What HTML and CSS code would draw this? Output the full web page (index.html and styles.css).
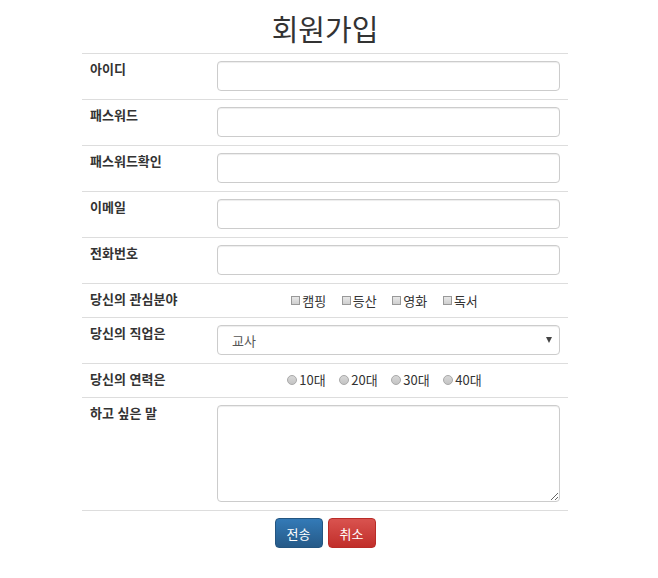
FILE: index.html
```html
<!DOCTYPE html>
<html lang="ko">
<head>
    <meta charset="UTF-8">
    <title>회원가입</title>
    <link rel="stylesheet" href="styles.css">
</head>
<body>
    <div class="container">
        <h1>회원가입</h1>
        <form>
            <table class="join-table">
                <tr>
                    <th>아이디</th>
                    <td><input type="text" class="form-control"></td>
                </tr>
                <tr>
                    <th>패스워드</th>
                    <td><input type="password" class="form-control"></td>
                </tr>
                <tr>
                    <th>패스워드확인</th>
                    <td><input type="password" class="form-control"></td>
                </tr>
                <tr>
                    <th>이메일</th>
                    <td><input type="text" class="form-control"></td>
                </tr>
                <tr>
                    <th>전화번호</th>
                    <td><input type="text" class="form-control"></td>
                </tr>
                <tr>
                    <th>당신의 관심분야</th>
                    <td class="choices">
                        <label><input type="checkbox">캠핑</label>
                        <label><input type="checkbox">등산</label>
                        <label><input type="checkbox">영화</label>
                        <label><input type="checkbox">독서</label>
                    </td>
                </tr>
                <tr>
                    <th>당신의 직업은</th>
                    <td>
                        <div class="select-wrap">
                            <select class="form-control">
                                <option>교사</option>
                                <option>학생</option>
                                <option>회사원</option>
                            </select>
                        </div>
                    </td>
                </tr>
                <tr>
                    <th>당신의 연력은</th>
                    <td class="choices radios">
                        <label><input type="radio" name="age">10대</label>
                        <label><input type="radio" name="age">20대</label>
                        <label><input type="radio" name="age">30대</label>
                        <label><input type="radio" name="age">40대</label>
                    </td>
                </tr>
                <tr>
                    <th>하고 싶은 말</th>
                    <td><textarea class="form-control"></textarea></td>
                </tr>
            </table>
            <div class="buttons">
                <button type="submit" class="btn btn-primary">전송</button>
                <button type="reset" class="btn btn-danger">취소</button>
            </div>
        </form>
    </div>
</body>
</html>
```

FILE: styles.css
```css
* {
    margin: 0;
    padding: 0;
    box-sizing: border-box;
    font-family: "Noto Sans CJK KR", "Noto Sans", sans-serif;
}

body {
    background-color: #fff;
    color: #333;
    font-size: 13px;
}

.container {
    width: 486px;
    margin-left: 82px;
}

h1 {
    text-align: center;
    font-size: 29px;
    font-weight: 400;
    line-height: 36px;
    margin-top: 10px;
    margin-bottom: 7px;
}

.join-table {
    width: 100%;
    border-collapse: collapse;
    border-bottom: 1px solid #ddd;
}

.join-table th,
.join-table td {
    border-top: 1px solid #ddd;
    padding: 7px 8px 8px;
    vertical-align: top;
    text-align: left;
    line-height: 20px;
}

.join-table th {
    width: 127px;
    font-weight: 700;
    font-size: 13px;
    padding-top: 5px;
}

.form-control {
    display: block;
    width: 100%;
    height: 30px;
    border: 1px solid #ccc;
    border-radius: 4px;
    padding: 4px 14px;
    font-size: 13px;
    color: #555;
    background-color: #fff;
    box-shadow: inset 0 1px 1px rgba(0, 0, 0, 0.075);
}

textarea.form-control {
    height: 97px;
    resize: vertical;
}

.select-wrap {
    position: relative;
}

.select-wrap select {
    appearance: none;
    -webkit-appearance: none;
}

.select-wrap::after {
    content: "";
    position: absolute;
    right: 8px;
    top: 12px;
    border-left: 3px solid transparent;
    border-right: 3px solid transparent;
    border-top: 6px solid #444;
}

.join-table .choices {
    text-align: center;
    height: 34px;
    padding: 6px 16px 6px 8px;
}

.join-table .choices + th,
.join-table th:has(+ .choices) {
    padding-bottom: 6px;
}

.choices label {
    display: inline-flex;
    align-items: center;
    font-size: 13px;
    margin: 0 6px;
    color: #333;
}

.radios label {
    margin: 0 5px;
}

.choices input {
    appearance: none;
    -webkit-appearance: none;
    width: 9px;
    height: 9px;
    margin-right: 2px;
    border: 1px solid #999;
    background: linear-gradient(#e8e8e8, #cfcfcf);
}

.choices input[type="radio"] {
    width: 10px;
    height: 10px;
    border-radius: 50%;
    border-color: #aaa;
    background: linear-gradient(#d8d8d8, #c4c4c4);
}

.buttons {
    display: flex;
    justify-content: center;
    gap: 5px;
    padding-top: 7px;
}

.btn {
    width: 48px;
    height: 30px;
    border: 1px solid;
    border-radius: 4px;
    color: #fff;
    font-size: 13px;
    cursor: pointer;
}

.btn-primary {
    background: linear-gradient(#337ab7, #265a88);
    border-color: #245580;
}

.btn-danger {
    background: linear-gradient(#d9534f, #c12e2a);
    border-color: #b92c28;
}
```
